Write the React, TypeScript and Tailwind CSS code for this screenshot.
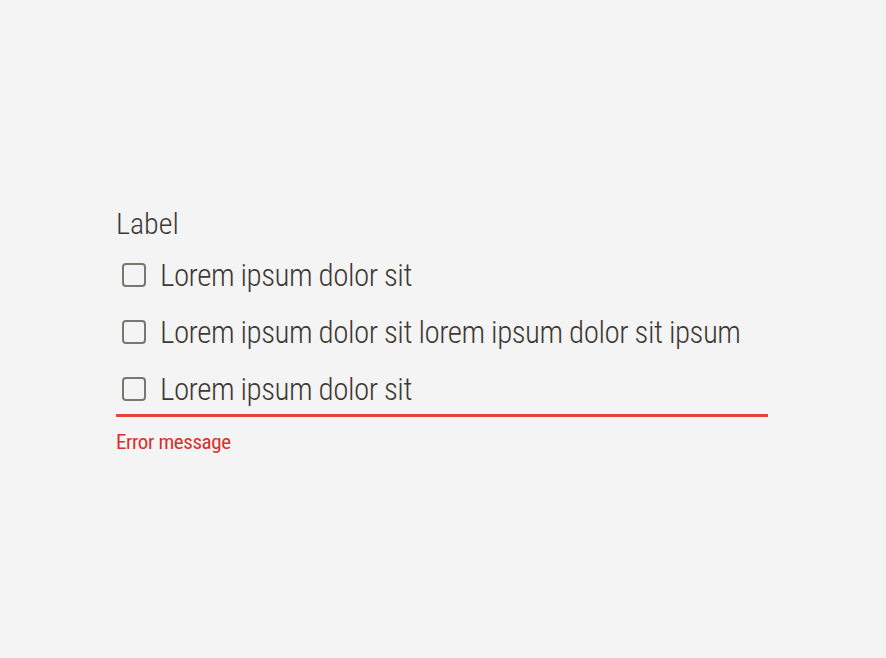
import { useState } from 'react';

const options = [
  'Lorem ipsum dolor sit',
  'Lorem ipsum dolor sit lorem ipsum dolor sit ipsum',
  'Lorem ipsum dolor sit',
];

function Checkbox({ label }: { label: string }) {
  const [checked, setChecked] = useState(false);

  return (
    <label className="flex items-center gap-[14px] h-[50px] cursor-pointer">
      <span className="ml-[6px] h-[24px] w-[24px] shrink-0 rounded-[4px] border-2 border-[#7a7672] flex items-center justify-center">
        {checked && <span className="h-[12px] w-[12px] bg-[#3d3935]" />}
      </span>
      <input
        type="checkbox"
        className="hidden"
        checked={checked}
        onChange={() => setChecked(!checked)}
      />
      <span className="text-[31px] tracking-[-0.5px] font-light text-[#3d3935] leading-none whitespace-nowrap">
        {label}
      </span>
    </label>
  );
}

export default function App() {
  return (
    <div
      className="min-h-screen bg-[#f4f4f4] pt-[209px] pl-[116px]"
      style={{ fontFamily: '"Roboto Condensed", Roboto, sans-serif' }}
    >
      <div className="w-[652px]" role="group">
        <div className="text-[30px] font-light text-[#3d3935] leading-none mb-[11px]">Label</div>
        <div className="flex flex-col gap-[7px] border-b-[3px] border-[#e8433a]">
          {options.map((opt, i) => (
            <Checkbox key={i} label={opt} />
          ))}
        </div>
        <p className="mt-[15px] text-[21px] tracking-[-0.4px] text-[#d8302a] leading-none">Error message</p>
      </div>
    </div>
  );
}
